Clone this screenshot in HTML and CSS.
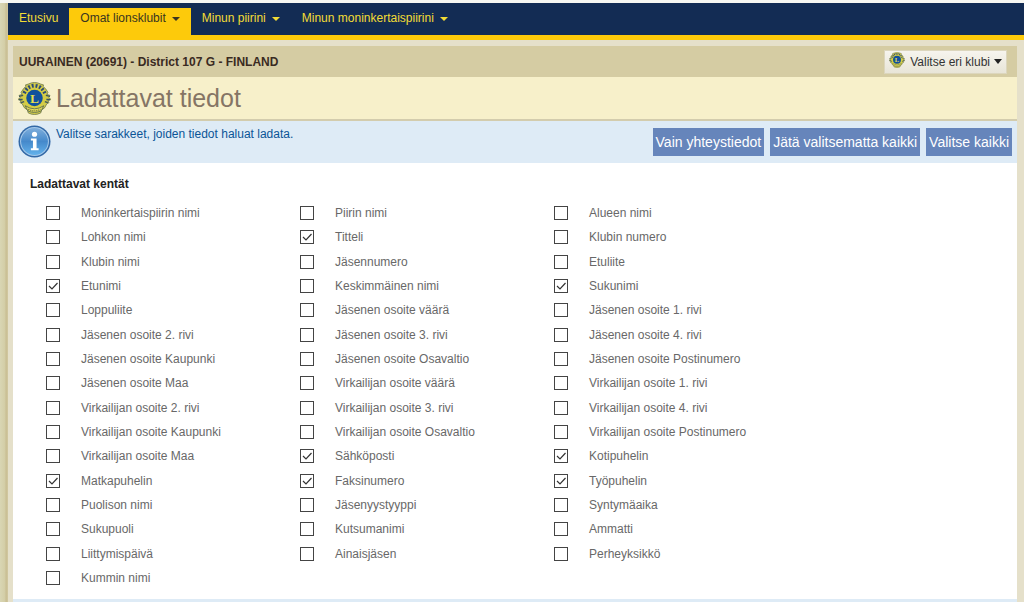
FILE: index.html
```
<!DOCTYPE html>
<html lang="fi">
<head>
<meta charset="utf-8">
<title>Ladattavat tiedot</title>
<link rel="stylesheet" href="styles.css">
</head>
<body>
<div class="page">
  <nav class="menu">
    <a href="#">Etusivu</a>
    <a href="#" class="active">Omat lionsklubit<i class="caret"></i></a>
    <a href="#">Minun piirini<i class="caret"></i></a>
    <a href="#">Minun moninkertaispiirini<i class="caret"></i></a>
  </nav>
  <main class="panel">
    <header class="club">
      <strong>UURAINEN (20691) - District 107 G - FINLAND</strong>
      <button type="button" class="switch"><svg class="lion-small" viewBox="0 0 32 32" aria-hidden="true"><use href="#lion"/><text x="16" y="20" class="lion-letter">L</text></svg>Valitse eri klubi<i class="caret"></i></button>
    </header>
    <div class="title">
      <svg class="lion" viewBox="0 0 32 32" aria-hidden="true">
        <g id="lion">
          <path d="M3 10Q6 5 8 4L7 3L10 2Q16-1 22 2L25 3L24 4Q27 6 29 10L28 12L31 13L30 15L32 17L29 18L30 20L28 21Q26 26 23 27L22 30Q16 33 10 30L9 27Q6 26 4 21L2 20L3 18L0 17L2 15L1 13L4 12Z" fill="#d3cc48" stroke="#6f7a50" stroke-width=".8"/>
          <path d="M6 11Q9 4 16 3.500Q23 4 26 11" fill="none" stroke="#2c4a77" stroke-width="3.600" stroke-dasharray="1.800 1.700"/>
          <path d="M1 14L5 13M1 17H4.500M3 20L6 19M31 14L27 13M31 17H27.500M29 20L26 19" stroke="#3c5560" stroke-width="1.300"/>
          <path d="M7 23Q16 29 25 23L22.500 28Q16 31 9.500 28Z" fill="#e6db5b" stroke="#536652" stroke-width=".8"/>
          <path d="M10 26.500Q16 29.500 22 26.500" fill="none" stroke="#6d743f" stroke-width="1.400" stroke-dasharray="1 1"/>
          <circle cx="16" cy="15.500" r="9.200" fill="#d9ce3e"/>
          <circle cx="16" cy="15.500" r="8" fill="#12519c"/>
        </g>
        <text x="16" y="20" class="lion-letter">L</text>
      </svg>
      <h1>Ladattavat tiedot</h1>
    </div>
    <div class="notice">
      <svg class="info" viewBox="0 0 32 32" aria-hidden="true">
        <defs><linearGradient id="blue" x2="0" y2="1"><stop offset="0" stop-color="#7eaddb"/><stop offset=".5" stop-color="#4589cb"/><stop offset="1" stop-color="#63b1ea"/></linearGradient></defs>
        <circle cx="16" cy="16" r="15.500" fill="#3268a6"/>
        <circle cx="16" cy="16" r="14" fill="#a5c9ea"/>
        <circle cx="16" cy="16" r="13" fill="url(#blue)"/>
        <circle cx="16" cy="9" r="2.500" fill="#fff"/>
        <path d="M12.500 13H18V22.500H20V24.500H12.500V22.500H14.500V15H12.500Z" fill="#fff"/>
      </svg>
      <p>Valitse sarakkeet, joiden tiedot haluat ladata.</p>
      <div class="actions">
        <button type="button">Vain yhteystiedot</button>
        <button type="button">Jätä valitsematta kaikki</button>
        <button type="button">Valitse kaikki</button>
      </div>
    </div>
    <form class="fields">
      <h2>Ladattavat kentät</h2>
      <div class="grid">
        <label><input type="checkbox">Moninkertaispiirin nimi</label>
        <label><input type="checkbox">Piirin nimi</label>
        <label><input type="checkbox">Alueen nimi</label>
        <label><input type="checkbox">Lohkon nimi</label>
        <label><input type="checkbox" checked>Titteli</label>
        <label><input type="checkbox">Klubin numero</label>
        <label><input type="checkbox">Klubin nimi</label>
        <label><input type="checkbox">Jäsennumero</label>
        <label><input type="checkbox">Etuliite</label>
        <label><input type="checkbox" checked>Etunimi</label>
        <label><input type="checkbox">Keskimmäinen nimi</label>
        <label><input type="checkbox" checked>Sukunimi</label>
        <label><input type="checkbox">Loppuliite</label>
        <label><input type="checkbox">Jäsenen osoite väärä</label>
        <label><input type="checkbox">Jäsenen osoite 1. rivi</label>
        <label><input type="checkbox">Jäsenen osoite 2. rivi</label>
        <label><input type="checkbox">Jäsenen osoite 3. rivi</label>
        <label><input type="checkbox">Jäsenen osoite 4. rivi</label>
        <label><input type="checkbox">Jäsenen osoite Kaupunki</label>
        <label><input type="checkbox">Jäsenen osoite Osavaltio</label>
        <label><input type="checkbox">Jäsenen osoite Postinumero</label>
        <label><input type="checkbox">Jäsenen osoite Maa</label>
        <label><input type="checkbox">Virkailijan osoite väärä</label>
        <label><input type="checkbox">Virkailijan osoite 1. rivi</label>
        <label><input type="checkbox">Virkailijan osoite 2. rivi</label>
        <label><input type="checkbox">Virkailijan osoite 3. rivi</label>
        <label><input type="checkbox">Virkailijan osoite 4. rivi</label>
        <label><input type="checkbox">Virkailijan osoite Kaupunki</label>
        <label><input type="checkbox">Virkailijan osoite Osavaltio</label>
        <label><input type="checkbox">Virkailijan osoite Postinumero</label>
        <label><input type="checkbox">Virkailijan osoite Maa</label>
        <label><input type="checkbox" checked>Sähköposti</label>
        <label><input type="checkbox" checked>Kotipuhelin</label>
        <label><input type="checkbox" checked>Matkapuhelin</label>
        <label><input type="checkbox" checked>Faksinumero</label>
        <label><input type="checkbox" checked>Työpuhelin</label>
        <label><input type="checkbox">Puolison nimi</label>
        <label><input type="checkbox">Jäsenyystyyppi</label>
        <label><input type="checkbox">Syntymäaika</label>
        <label><input type="checkbox">Sukupuoli</label>
        <label><input type="checkbox">Kutsumanimi</label>
        <label><input type="checkbox">Ammatti</label>
        <label><input type="checkbox">Liittymispäivä</label>
        <label><input type="checkbox">Ainaisjäsen</label>
        <label><input type="checkbox">Perheyksikkö</label>
        <label><input type="checkbox">Kummin nimi</label>
      </div>
    </form>
  </main>
</div>
</body>
</html>
```
FILE: styles.css
```
* { box-sizing: border-box; }
body {
  margin: 0;
  font-family: "Liberation Sans", Arial, sans-serif;
  font-size: 12px;
  background: #e5e0ca;
}
button { font-family: inherit; border: 0; cursor: pointer; }
h1, h2, p { margin: 0; }

.page {
  min-height: 100vh;
  display: flex;
  flex-direction: column;
  border-top: 3px solid #f7f7f2;
  padding-left: 8px;
  background: linear-gradient(to right, #d9d6b4 0, #d3cda6 5px, #c8bd92 6px, #d2c9a2 8px, #e5e0ca 8px);
}
.menu {
  display: flex;
  height: 37px;
  background: #132c54;
  border-bottom: 5px solid #fdca0b;
}
.menu a {
  display: flex;
  align-items: center;
  padding: 0 11px 3px;
  color: #f3dc35;
  text-decoration: none;
}
.menu a.active { margin-top: 5px; padding-bottom: 8px; background: #fdca0b; color: #3a3420; }
.caret {
  margin: 2px 0 0 6px;
  border: 4px solid transparent;
  border-top-color: currentColor;
  border-bottom: 0;
}

.panel {
  flex: 1;
  display: flex;
  flex-direction: column;
  margin: 6px 7px 0 5px;
  background: #fff;
  border-bottom: 3px solid #deebf6;
}
.club {
  display: flex;
  align-items: center;
  justify-content: space-between;
  height: 31px;
  padding: 0 10px 0 6px;
  background: #d5cca3;
  color: #3a2a22;
}
.switch {
  display: flex;
  align-items: center;
  height: 24px;
  padding: 0 4px;
  background: linear-gradient(#f6f4ee, #e8e5d8);
  border: 1px solid #dcd6bd;
  font-size: 12px;
  color: #333;
}
.lion-small { width: 16px; height: 16px; margin: 0 5px 3px 0; }
.lion-letter { font: bold 13px "Liberation Serif", serif; fill: #e8df4c; text-anchor: middle; }
.switch .caret { margin: 0 0 0 4px; border-width: 5px 4px 0; color: #222; }
.title {
  display: flex;
  align-items: center;
  gap: 5px;
  height: 44px;
  padding-left: 5px;
  background: #f7f0ca;
  border-bottom: 2px solid #d3ccad;
}
.title h1 { font-size: 25px; font-weight: normal; color: #857565; }
.lion { width: 33px; height: 33px; }
.notice {
  display: flex;
  align-items: flex-start;
  height: 42px;
  padding: 4px 5px 0;
  gap: 5px;
  background: #deebf6;
}
.info { width: 33px; height: 33px; }
.notice p { flex: 1; padding-top: 2px; color: #0b5596; }
.actions { display: flex; gap: 6px; padding-top: 3px; }
.actions button {
  height: 28px;
  padding: 0 3px;
  background: #6685bb;
  color: #fff;
  font-size: 14px;
}

.fields { flex: 1; display: flex; flex-direction: column; padding: 13px 16px 9px 17px; }
.fields h2 { font-size: 12px; line-height: 16px; color: #222; margin-bottom: 9px; }
.grid {
  flex: 1;
  display: grid;
  grid-template-columns: 254px 254px 1fr;
  grid-auto-rows: 1fr;
  padding-left: 16px;
}
.grid label { display: flex; align-items: center; gap: 21px; min-height: 20px; color: #686868; }
.grid input {
  appearance: none;
  width: 14px;
  height: 14px;
  margin: 0;
  border: 1px solid #444;
  background: #fff;
}
.grid input:checked {
  background: url("data:image/svg+xml,%3Csvg xmlns='http://www.w3.org/2000/svg' viewBox='0 0 12 12'%3E%3Cpath d='M2 6L5 9L10.500 3' fill='none' stroke='%23333' stroke-width='1.200'/%3E%3C/svg%3E") center / 12px 12px no-repeat;
}
```
